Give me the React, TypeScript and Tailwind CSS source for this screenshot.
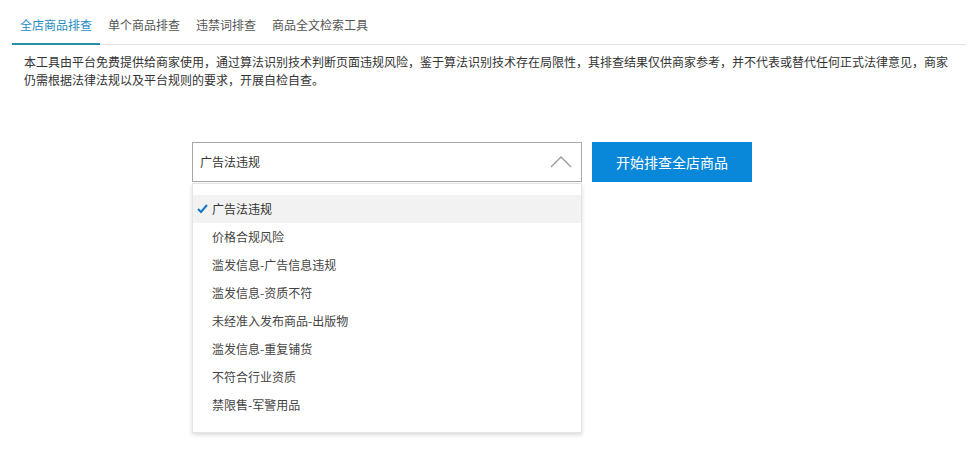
import React from 'react';

const tabs = ['全店商品排查', '单个商品排查', '违禁词排查', '商品全文检索工具'];

const options = [
  '广告法违规',
  '价格合规风险',
  '滥发信息-广告信息违规',
  '滥发信息-资质不符',
  '未经准入发布商品-出版物',
  '滥发信息-重复铺货',
  '不符合行业资质',
  '禁限售-军警用品',
];

const App = () => {
  return (
    <div
      className="w-[976px] h-[451px] bg-white text-[#333] overflow-hidden"
      style={{ fontFamily: '"Noto Sans CJK SC", "Noto Sans", sans-serif' }}
    >
      {/* tab bar */}
      <div className="flex ml-3 mr-[10px] h-[45px] border-b border-[#e3e3e3]">
        {tabs.map((t, i) => (
          <div
            key={t}
            className={
              i === 0
                ? 'px-2 pt-[6px] flex items-center text-[12px] text-[#1f8bc0] border-b-2 border-[#2391a4] -mb-px'
                : 'px-2 pt-[6px] flex items-center text-[12px] text-[#555]'
            }
          >
            {t}
          </div>
        ))}
      </div>

      {/* notice */}
      <p className="pl-6 pr-[20px] pt-[8px] text-[12px] leading-[18px] text-[#333]">
        本工具由平台免费提供给商家使用，通过算法识别技术判断页面违规风险，鉴于算法识别技术存在局限性，其排查结果仅供商家参考，并不代表或替代任何正式法律意见，商家仍需根据法律法规以及平台规则的要求，开展自检自查。
      </p>

      {/* select + button */}
      <div className="flex ml-[192px] mt-[53px]">
        <div className="relative">
          <div className="w-[390px] h-[40px] border border-[#a8a8a8] flex items-center justify-between pl-[7px] pr-[8px] text-[12px]">
            <span>广告法违规</span>
            <svg width="24" height="14" viewBox="0 0 24 14" fill="none">
              <path d="M2 12 L12 2 L22 12" stroke="#9a9a9a" strokeWidth="1.3" />
            </svg>
          </div>
          <div className="absolute left-0 top-[41px] w-[390px] h-[250px] bg-white border border-[#e4e4e4] shadow-[0_2px_4px_rgba(0,0,0,0.15)] pt-[11px] z-10">
            {options.map((o, i) => (
              <div
                key={o}
                className={
                  i === 0
                    ? 'h-[28px] flex items-center bg-[#f2f2f2] text-[12px] text-[#333]'
                    : 'h-[28px] flex items-center pl-[19px] text-[12px] text-[#444]'
                }
              >
                {i === 0 && (
                  <svg width="19" height="12" viewBox="0 0 19 12" className="shrink-0">
                    <path d="M5 6 L8 9 L14 2" stroke="#1677c8" strokeWidth="2" fill="none" />
                  </svg>
                )}
                {o}
              </div>
            ))}
          </div>
        </div>
        <button className="ml-[10px] w-[160px] h-[40px] bg-[#0987d8] text-white text-[14px]">
          开始排查全店商品
        </button>
      </div>
    </div>
  );
};

export default App;
